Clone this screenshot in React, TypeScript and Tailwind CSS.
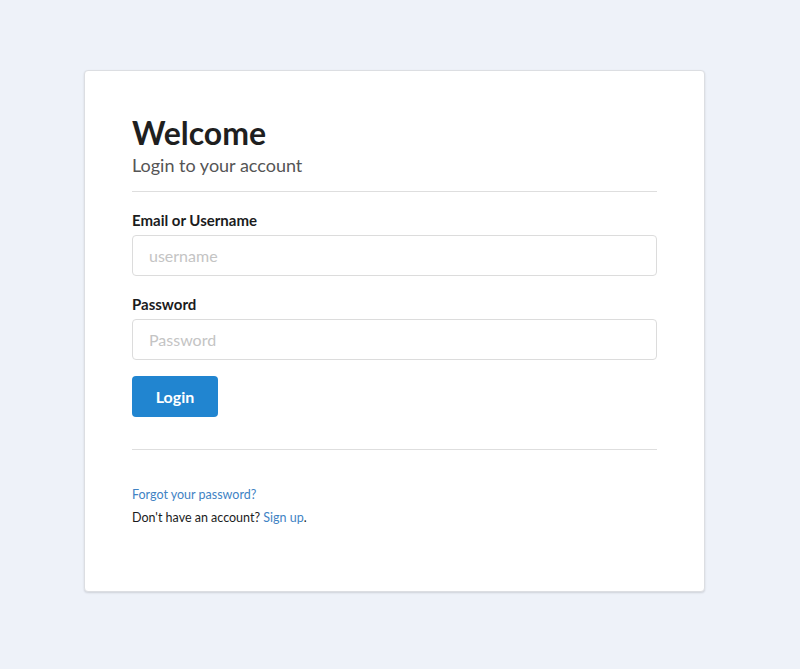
export default function App() {
  return (
    <div
      className="min-h-[669px] w-full bg-[#eef2f9] pt-[70px]"
      style={{ fontFamily: "Lato, 'Open Sans', sans-serif" }}
    >
      <div className="ml-[84px] w-[621px] rounded-[4px] border border-[#dcdee2] bg-white px-[47px] pt-[43px] pb-[62px] shadow-[0_1px_2px_rgba(34,36,38,0.15)]">
        {/* Header */}
        <h1 className="text-[32px] font-bold leading-[38px] text-[#1f1f1f]">Welcome</h1>
        <p className="mt-[2px] text-[18px] leading-[22px] text-[#555]">Login to your account</p>
        <div className="mt-[15px] border-t border-[#dedede]" />

        {/* Form */}
        <form className="mt-[18px]" onSubmit={(e) => e.preventDefault()}>
          <label className="block text-[15px] font-bold leading-[20px] text-[#1b1c1d]">
            Email or Username
          </label>
          <input
            type="text"
            placeholder="username"
            className="mt-[5px] block h-[41px] w-full rounded-[4px] border border-[#dcdcdc] px-[16px] text-[16px] text-[#333] placeholder:text-[#c4c4c4] focus:outline-none"
          />
          <label className="mt-[18px] block text-[15px] font-bold leading-[20px] text-[#1b1c1d]">
            Password
          </label>
          <input
            type="password"
            placeholder="Password"
            className="mt-[5px] block h-[41px] w-full rounded-[4px] border border-[#dcdcdc] px-[16px] text-[16px] text-[#333] placeholder:text-[#c4c4c4] focus:outline-none"
          />
          <button
            type="submit"
            className="mt-[16px] h-[41px] w-[86px] rounded-[4px] bg-[#2185d0] text-[16px] font-bold text-white"
          >
            Login
          </button>
        </form>

        <div className="mt-[32px] border-t border-[#dedede]" />

        {/* Footer links */}
        <div className="mt-[33px] text-[12.5px] leading-[23px] text-[#1b1c1d]">
          <p>
            <a href="#" className="text-[#4183c4]">
              Forgot your password?
            </a>
          </p>
          <p>
            Don't have an account?{" "}
            <a href="#" className="text-[#4183c4]">
              Sign up
            </a>
            .
          </p>
        </div>
      </div>
    </div>
  );
}
